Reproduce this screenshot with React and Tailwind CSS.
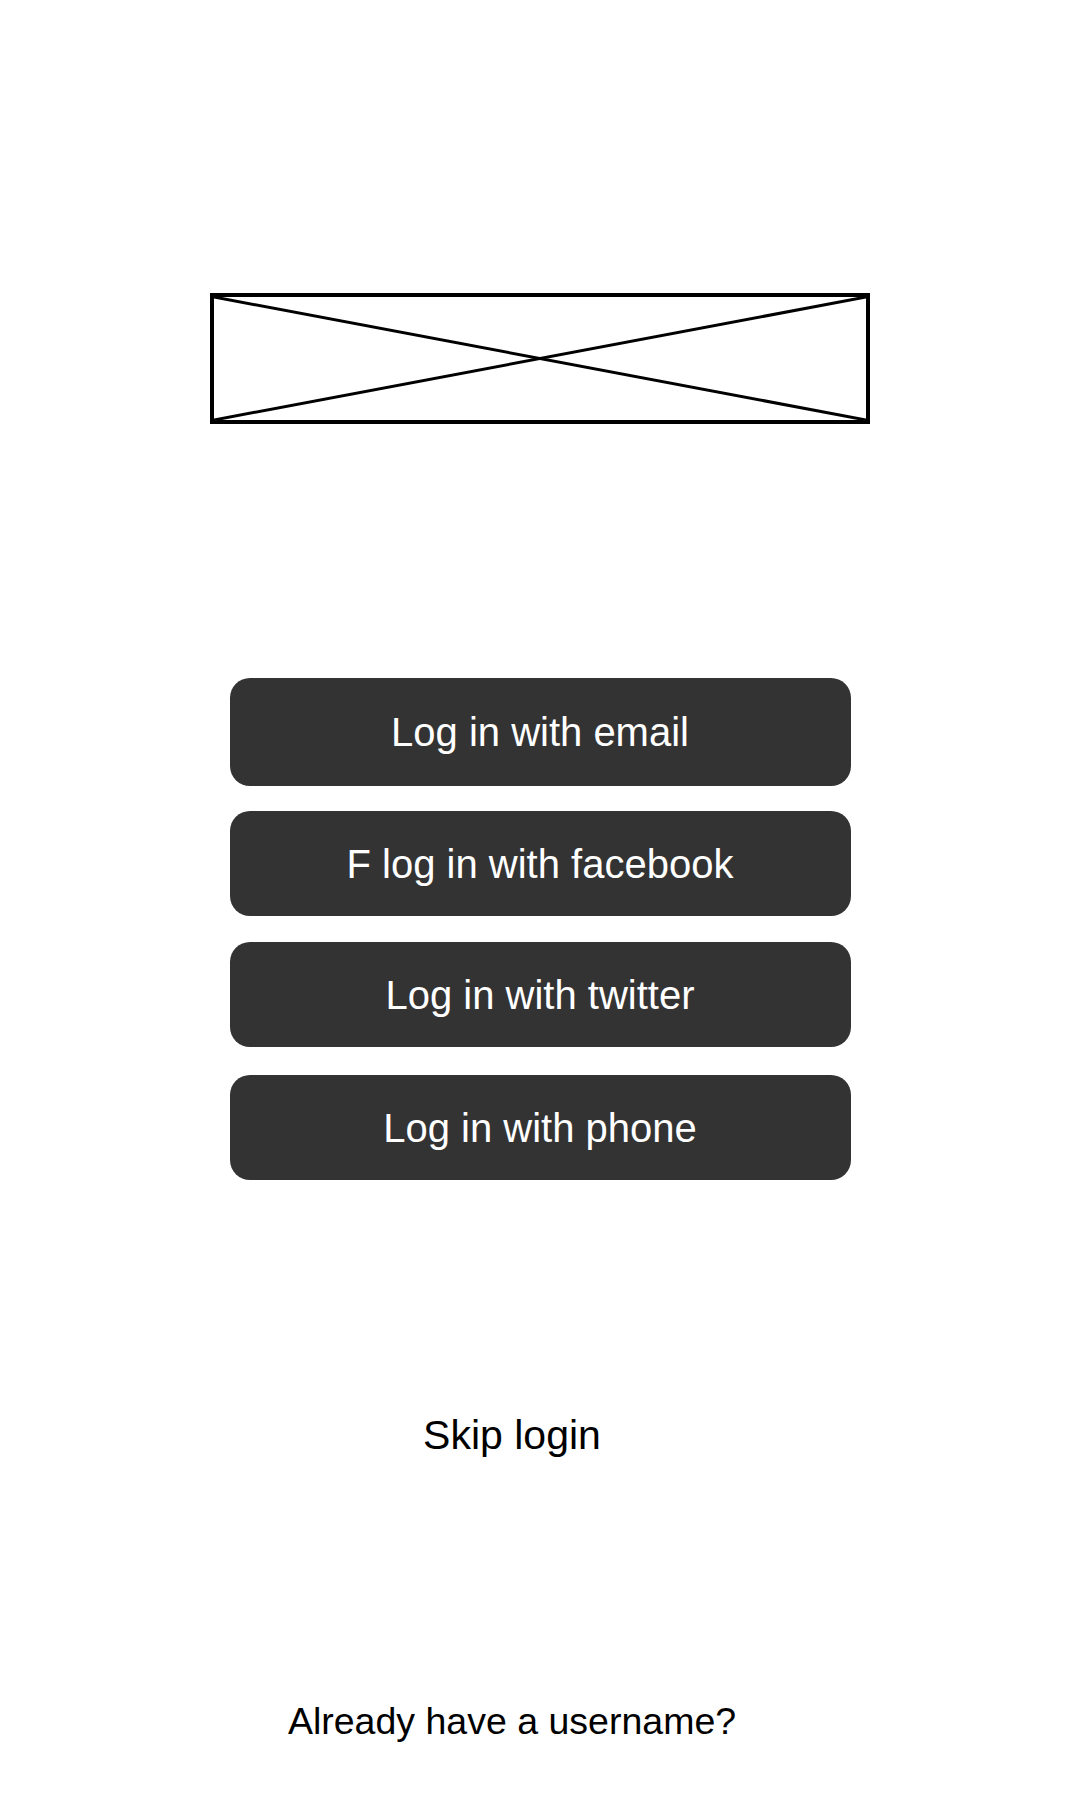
const buttons = [
  { label: 'Log in with email', cls: 'h-[108px]' },
  { label: 'F log in with facebook', cls: 'mt-[25px] h-[105px]' },
  { label: 'Log in with twitter', cls: 'mt-[26px] h-[105px]' },
  { label: 'Log in with phone', cls: 'mt-[28px] h-[105px]' },
];

const App = () => {
  return (
    <div className="min-h-[1800px] w-full bg-white flex flex-col items-center font-['Liberation_Sans',Arial,sans-serif]">
      {/* logo placeholder */}
      <div className="relative mt-[293px] w-[660px] h-[131px] border-4 border-black">
        <svg className="absolute inset-0 w-full h-full" viewBox="0 0 100 100" preserveAspectRatio="none">
          <line x1="0" y1="0" x2="100" y2="100" stroke="#000" strokeWidth="3" vectorEffect="non-scaling-stroke" />
          <line x1="100" y1="0" x2="0" y2="100" stroke="#000" strokeWidth="3" vectorEffect="non-scaling-stroke" />
        </svg>
      </div>

      <div className="mt-[254px] flex flex-col">
        {buttons.map((b) => (
          <button
            key={b.label}
            className={`w-[621px] rounded-[20px] bg-[#333333] text-white text-[40px] flex items-center justify-center ${b.cls}`}
          >
            {b.label}
          </button>
        ))}
      </div>

      <div className="mt-[231px] mr-[56px] text-[41px] leading-[48px] text-black">Skip login</div>

      <div className="mt-[240px] mr-[56px] text-[37.5px] leading-[44px] text-black">Already have a username?</div>
    </div>
  );
};

export default App;
